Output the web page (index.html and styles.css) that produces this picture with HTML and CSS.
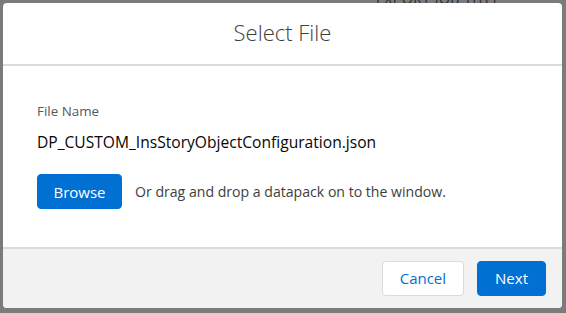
FILE: index.html
```html
<!DOCTYPE html>
<html lang="en">
<head>
  <meta charset="UTF-8" />
  <title>Select File</title>
  <link rel="stylesheet" href="styles.css">
</head>
<body>
  <div class="backdrop-text">EXPORT JOB TITLE</div>

  <!-- Select File modal -->
  <div class="modal">
    <div class="modal-header">
      <h2>Select File</h2>
    </div>
    <div class="modal-body">
      <p class="label">File Name</p>
      <p class="file-name">DP_CUSTOM_InsStoryObjectConfiguration.json</p>
      <div class="browse-row">
        <button class="btn btn-brand">Browse</button>
        <span class="hint">Or drag and drop a datapack on to the window.</span>
      </div>
    </div>
    <div class="modal-footer">
      <button class="btn btn-neutral">Cancel</button>
      <button class="btn btn-brand">Next</button>
    </div>
  </div>
</body>
</html>
```

FILE: styles.css
```css
body {
  margin: 0;
  height: 313px;
  background: #7b7b7b;
  font-family: 'Open Sans', sans-serif;
  color: #3e3e3c;
  position: relative;
  overflow: hidden;
}

.backdrop-text {
  position: absolute;
  top: -11px;
  left: 376px;
  font-size: 14px;
  color: #2b2b2b;
  letter-spacing: 0.5px;
}

.modal {
  position: absolute;
  top: 3px;
  left: 3px;
  width: 559px;
  height: 305px;
  background: #fff;
  border-radius: 4px;
  display: flex;
  flex-direction: column;
  overflow: hidden;
}

.modal-header {
  height: 63px;
  box-sizing: border-box;
  display: flex;
  align-items: center;
  justify-content: center;
  border-bottom: 2px solid #dddbda;
  padding-bottom: 3px;
}

.modal-header h2 {
  margin: 0;
  font-size: 22px;
  font-weight: 300;
  color: #3e3e3c;
}

.modal-body {
  flex: 1;
  padding: 0 34px;
}

.label {
  margin: 36px 0 0;
  font-size: 13.4px;
  color: #54585c;
}

.file-name {
  margin: 11px 0 0;
  font-size: 15.6px;
  color: #080707;
}

.browse-row {
  display: flex;
  align-items: center;
  gap: 13px;
  margin-top: 21px;
}

.hint {
  font-size: 14.1px;
  color: #3e3e3c;
}

.btn {
  font-family: 'Open Sans', sans-serif;
  font-size: 15px;
  height: 35px;
  padding: 0 17px;
  border-radius: 4px;
  cursor: pointer;
}

.modal-body .btn {
  width: 85px;
  padding: 0;
}

.btn-brand {
  background: #0070d2;
  border: 1px solid #0070d2;
  color: #fff;
}

.btn-neutral {
  background: #fff;
  border: 1px solid #dddbda;
  color: #0070d2;
}

.modal-footer {
  height: 61px;
  box-sizing: border-box;
  background: #f3f2f2;
  border-top: 2px solid #dddbda;
  display: flex;
  align-items: center;
  justify-content: flex-end;
  gap: 13px;
  padding: 0 16px 1px;
}
```
